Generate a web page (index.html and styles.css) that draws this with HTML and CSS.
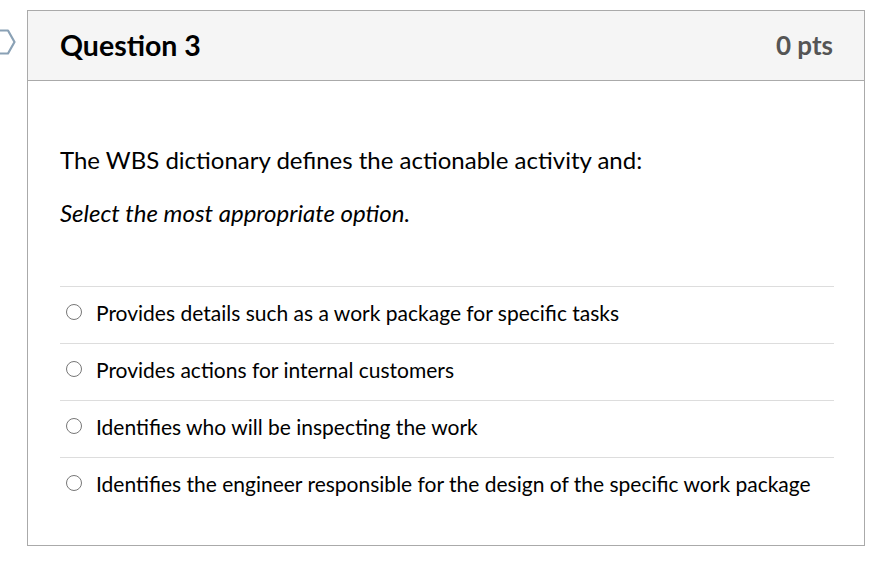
FILE: index.html
```html
<!DOCTYPE html>
<html>
<head>
<meta charset="utf-8">
<link rel="stylesheet" href="styles.css">
</head>
<body>
<div class="page">
  <svg class="flag" width="20" height="26" viewBox="0 0 20 26">
    <path d="M-10 1.5 H8 L14.5 13 L8 24.5 H-10" fill="none" stroke="#8aa1b5" stroke-width="2.2" stroke-linejoin="round"/>
  </svg>
  <div class="card">
    <div class="header">
      <h2 class="title">Question 3</h2>
      <span class="pts">0 pts</span>
    </div>
    <div class="body">
      <p class="prompt">The WBS dictionary defines the actionable activity and:</p>
      <p class="hint"><em>Select the most appropriate option.</em></p>
      <div class="answers">
        <label class="answer"><span class="radio"></span><span>Provides details such as a work package for specific tasks</span></label>
        <label class="answer"><span class="radio"></span><span>Provides actions for internal customers</span></label>
        <label class="answer"><span class="radio"></span><span>Identifies who will be inspecting the work</span></label>
        <label class="answer"><span class="radio"></span><span>Identifies the engineer responsible for the design of the specific work package</span></label>
      </div>
    </div>
  </div>
</div>
</body>
</html>
```
FILE: styles.css
```css
html, body {
  margin: 0;
  padding: 0;
  background: #fff;
}
body {
  font-family: Lato, "Liberation Sans", sans-serif;
  color: #000;
}
.page {
  position: relative;
  padding: 10px 0 0 27px;
}
.flag {
  position: absolute;
  left: 0;
  top: 29px;
}
.card {
  width: 836px;
  border: 1px solid #aaaaaa;
}
.header {
  height: 69px;
  background: #f5f5f5;
  border-bottom: 1px solid #aaaaaa;
  display: flex;
  align-items: center;
  justify-content: space-between;
  padding: 0 31px 0 32px;
}
.title {
  margin: 0 0 2px;
  font-size: 28.5px;
  font-weight: 700;
}
.pts {
  margin-bottom: 2px;
  font-size: 26px;
  font-weight: 700;
  color: #555;
}
.body {
  padding: 64px 30px 31px 32px;
}
.prompt {
  margin: 0;
  font-size: 24px;
  line-height: 30px;
}
.hint {
  margin: 23px 0 0;
  font-size: 24px;
  line-height: 30px;
}
.answers {
  margin-top: 58px;
}
.answer {
  box-sizing: border-box;
  display: flex;
  align-items: center;
  gap: 14px;
  height: 57px;
  border-top: 1px solid #dddddd;
  padding: 0 0 6px 6px;
  font-size: 21px;
}
.radio {
  width: 14px;
  height: 14px;
  border: 1.5px solid #777;
  border-radius: 50%;
  flex: none;
}
```
